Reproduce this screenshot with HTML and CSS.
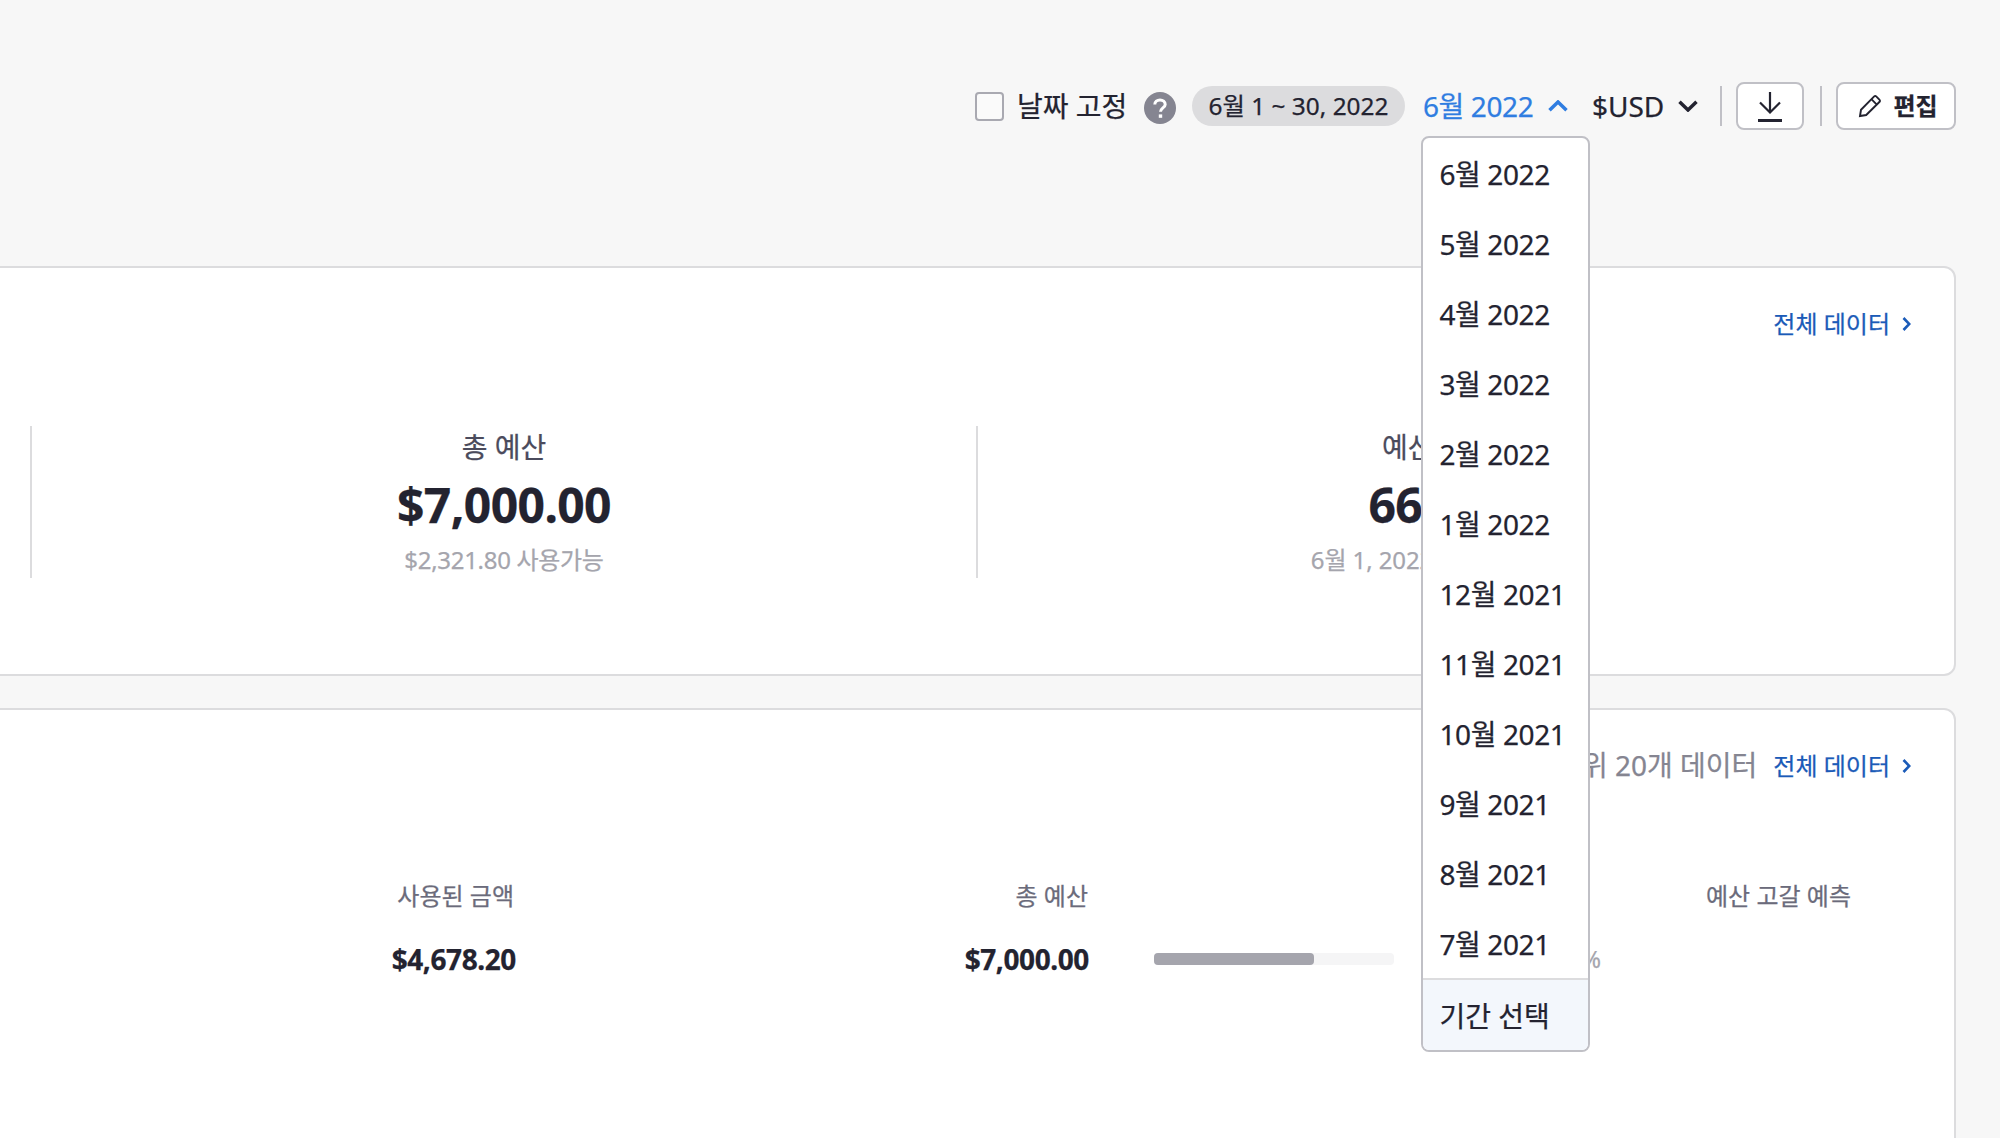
FILE: index.html
```html
<!DOCTYPE html>
<html lang="ko">
<head>
<meta charset="utf-8">
<title>예산</title>
<link rel="stylesheet" href="styles.css">
</head>
<body>
<header class="toolbar">
  <label class="pin"><span class="checkbox"></span><span class="pin-label">날짜 고정</span></label>
  <svg class="help" viewBox="0 0 32 32"><circle cx="16" cy="16" r="16" fill="#858591"/><path d="M10.800 12.600c0-2.800 2.300-4.600 5.200-4.600s5.200 1.700 5.200 4.400c0 3.400-4.700 3.700-4.700 7.400" fill="none" stroke="#fff" stroke-width="3"/><rect x="14.800" y="22.400" width="3.400" height="3.400" fill="#fff"/></svg>
  <span class="pill">6월 1 ~ 30, 2022</span>
  <div class="month">
    <span class="month-label">6월 2022</span>
    <svg class="chevron" viewBox="0 0 20 12"><path d="M1.500 10.300 10 2l8.500 8.300"/></svg>
    <ul class="menu">
      <li>6월 2022</li><li>5월 2022</li><li>4월 2022</li><li>3월 2022</li><li>2월 2022</li><li>1월 2022</li>
      <li>12월 2021</li><li>11월 2021</li><li>10월 2021</li><li>9월 2021</li><li>8월 2021</li><li>7월 2021</li>
      <li class="custom">기간 선택</li>
    </ul>
  </div>
  <div class="currency"><span class="currency-label">$USD</span><svg class="chevron" viewBox="0 0 20 12"><path d="M1.500 1.700l8.500 8.300 8.500-8.300"/></svg></div>
  <span class="rule"></span>
  <button class="btn download"><svg viewBox="0 0 24 32"><path d="M12 2v20M2 12.500l10 10 10-10" stroke-width="2.200"/><path d="M0 30.500h24" stroke-width="3"/></svg></button>
  <span class="rule"></span>
  <button class="btn edit"><svg viewBox="0 0 24 24"><path d="M2 22l1-6.200L16.200 2.400q1-.9 2 0l3.400 3.400q.9 1 0 2L8.200 21zM13.400 5.200l5.400 5.400" stroke-width="1.900"/></svg><span>편집</span></button>
</header>
<main>
  <section class="card summary">
    <a class="all">전체 데이터<svg viewBox="0 0 9 14"><path d="M1.500 1 7.300 7l-5.800 6"/></svg></a>
    <div class="stats">
      <div class="stat"><h3>총 예산</h3><strong>$7,000.00</strong><small>$2,321.80 사용가능</small></div>
      <div class="stat"><h3>예산 사용률</h3><strong>66.83%</strong><small class="range">6월 1, 2022 - 6월 30, 2022</small></div>
    </div>
  </section>
  <section class="card detail">
    <div class="detail-head"><span class="top">상위 20개 데이터</span><a class="all">전체 데이터<svg viewBox="0 0 9 14"><path d="M1.500 1 7.300 7l-5.800 6"/></svg></a></div>
    <div class="row head"><span>사용된 금액</span><span>총 예산</span><span></span><span>예산 고갈 예측</span></div>
    <div class="row values"><b>$4,678.20</b><b>$7,000.00</b><div class="usage"><div class="track"><div class="fill" style="width:66.83%"></div></div><span class="percent">66.83%</span></div><span></span></div>
  </section>
</main>
</body>
</html>
```
FILE: styles.css
```css
* { box-sizing: border-box; }
body {
  margin: 0;
  height: 1138px;
  overflow: hidden;
  background: #f7f7f7;
  color: #232330;
  font-family: "Noto Sans", "Noto Sans CJK KR", sans-serif;
  font-size: 28px;
  line-height: 40px;
  white-space: nowrap;
  -webkit-text-stroke: 0.25px currentColor;
}
svg { display: block; flex: none; fill: none; stroke: currentColor; }
.toolbar {
  display: flex;
  align-items: center;
  justify-content: flex-end;
  height: 266px;
  padding: 0 44px 54px 0;
}
.pin { display: flex; align-items: center; }
.checkbox { width: 29px; height: 29px; border: 2px solid #a9a9b1; border-radius: 4px; background: #fafafa; margin-right: 13px; }
.pin-label { width: 112px; }
.help { width: 32px; height: 32px; margin: 4px 16px 0 15px; stroke: none; }
.pill { width: 213px; height: 40px; border-radius: 20px; background: #dcdcde; font-size: 24.4px; text-align: center; line-height: 40px; }
.month { position: relative; display: flex; align-items: center; width: 170px; margin-left: 16px; padding-left: 2px; color: #2f7de1; }
.month-label { width: 125px; letter-spacing: -0.4px; }
.chevron { width: 20px; height: 12px; stroke-width: 3.5; }
.menu {
  position: absolute;
  top: 50px;
  left: 0;
  width: 169px;
  margin: 0;
  padding: 0;
  list-style: none;
  border: 2px solid #c0c0c6;
  border-radius: 8px;
  background: #fff;
  color: #232330;
  overflow: hidden;
  z-index: 2;
}
.menu li { height: 70px; padding-left: 16.5px; line-height: 72px; letter-spacing: -0.4px; }
.menu .custom { height: 72px; border-top: 2px solid #dcdcde; background: #f3f7fc; line-height: 73px; letter-spacing: 0; }
.currency { display: flex; align-items: center; width: 107px; }
.currency-label { width: 86px; margin-left: 1px; }
.rule { width: 2px; height: 40px; margin: 0 14px 0 22px; background: #c0c0c6; }
.btn { display: flex; align-items: center; justify-content: center; height: 48px; padding: 0; border: 2px solid #c0c0c6; border-radius: 8px; background: #fff; color: #232330; font: inherit; }
.download { width: 68px; }
.download svg { width: 24px; height: 32px; }
.download + .rule { margin: 0 14px 0 16px; }
.edit { width: 120px; gap: 11px; padding-left: 4px; font-size: 24px; font-weight: 700; }
.edit svg { width: 24px; height: 24px; }
.card { width: 1976px; margin-left: -20px; border: 2px solid #dcdcde; border-radius: 12px; background: #fff; }
.summary { height: 410px; padding-top: 36px; }
.all { display: flex; align-items: center; justify-content: flex-end; gap: 12px; padding-right: 43px; color: #1b5bb8; font-size: 24px; }
.all svg { width: 9px; height: 14px; stroke-width: 2.6; }
.stats { display: flex; margin: 82px 0 0 48px; }
.stat { display: flex; flex-direction: column; align-items: center; width: 946px; height: 152px; border-left: 2px solid #dcdcde; }
.stat h3 { margin: 1px 0 0; font-size: 28px; font-weight: 400; color: #4b4b5c; }
.stat strong { margin-top: 8px; font-size: 48px; line-height: 60px; letter-spacing: -0.6px; }
.stat small { margin-top: 5px; font-size: 24px; letter-spacing: -0.3px; color: #a5a5ad; }
.stat .range { letter-spacing: -0.1px; }
.detail { height: 460px; margin-top: 32px; padding-top: 36px; }
.detail-head { display: flex; justify-content: flex-end; align-items: center; }
.top { margin-right: 16px; line-height: 38px; margin-bottom: 2px; color: #858591; }
.row { display: grid; grid-template-columns: 534px 573px 544px 220px; align-items: center; height: 40px; text-align: right; }
.head { margin-top: 90px; color: #6b6b7b; font-size: 24px; }
.head span { padding-right: 2px; }
.head span:nth-child(2) { padding-right: 1px; }
.values { margin-top: 23px; }
.values b { margin-top: -1px; letter-spacing: -0.4px; }
.usage { display: flex; align-items: center; padding-left: 65px; }
.track { width: 240px; height: 12px; border-radius: 4px; background: #f5f5f6; }
.fill { height: 12px; border-radius: 4px; background: #a5a5ad; }
.percent { width: 207px; font-size: 23.5px; color: #a5a5ad; }
```
